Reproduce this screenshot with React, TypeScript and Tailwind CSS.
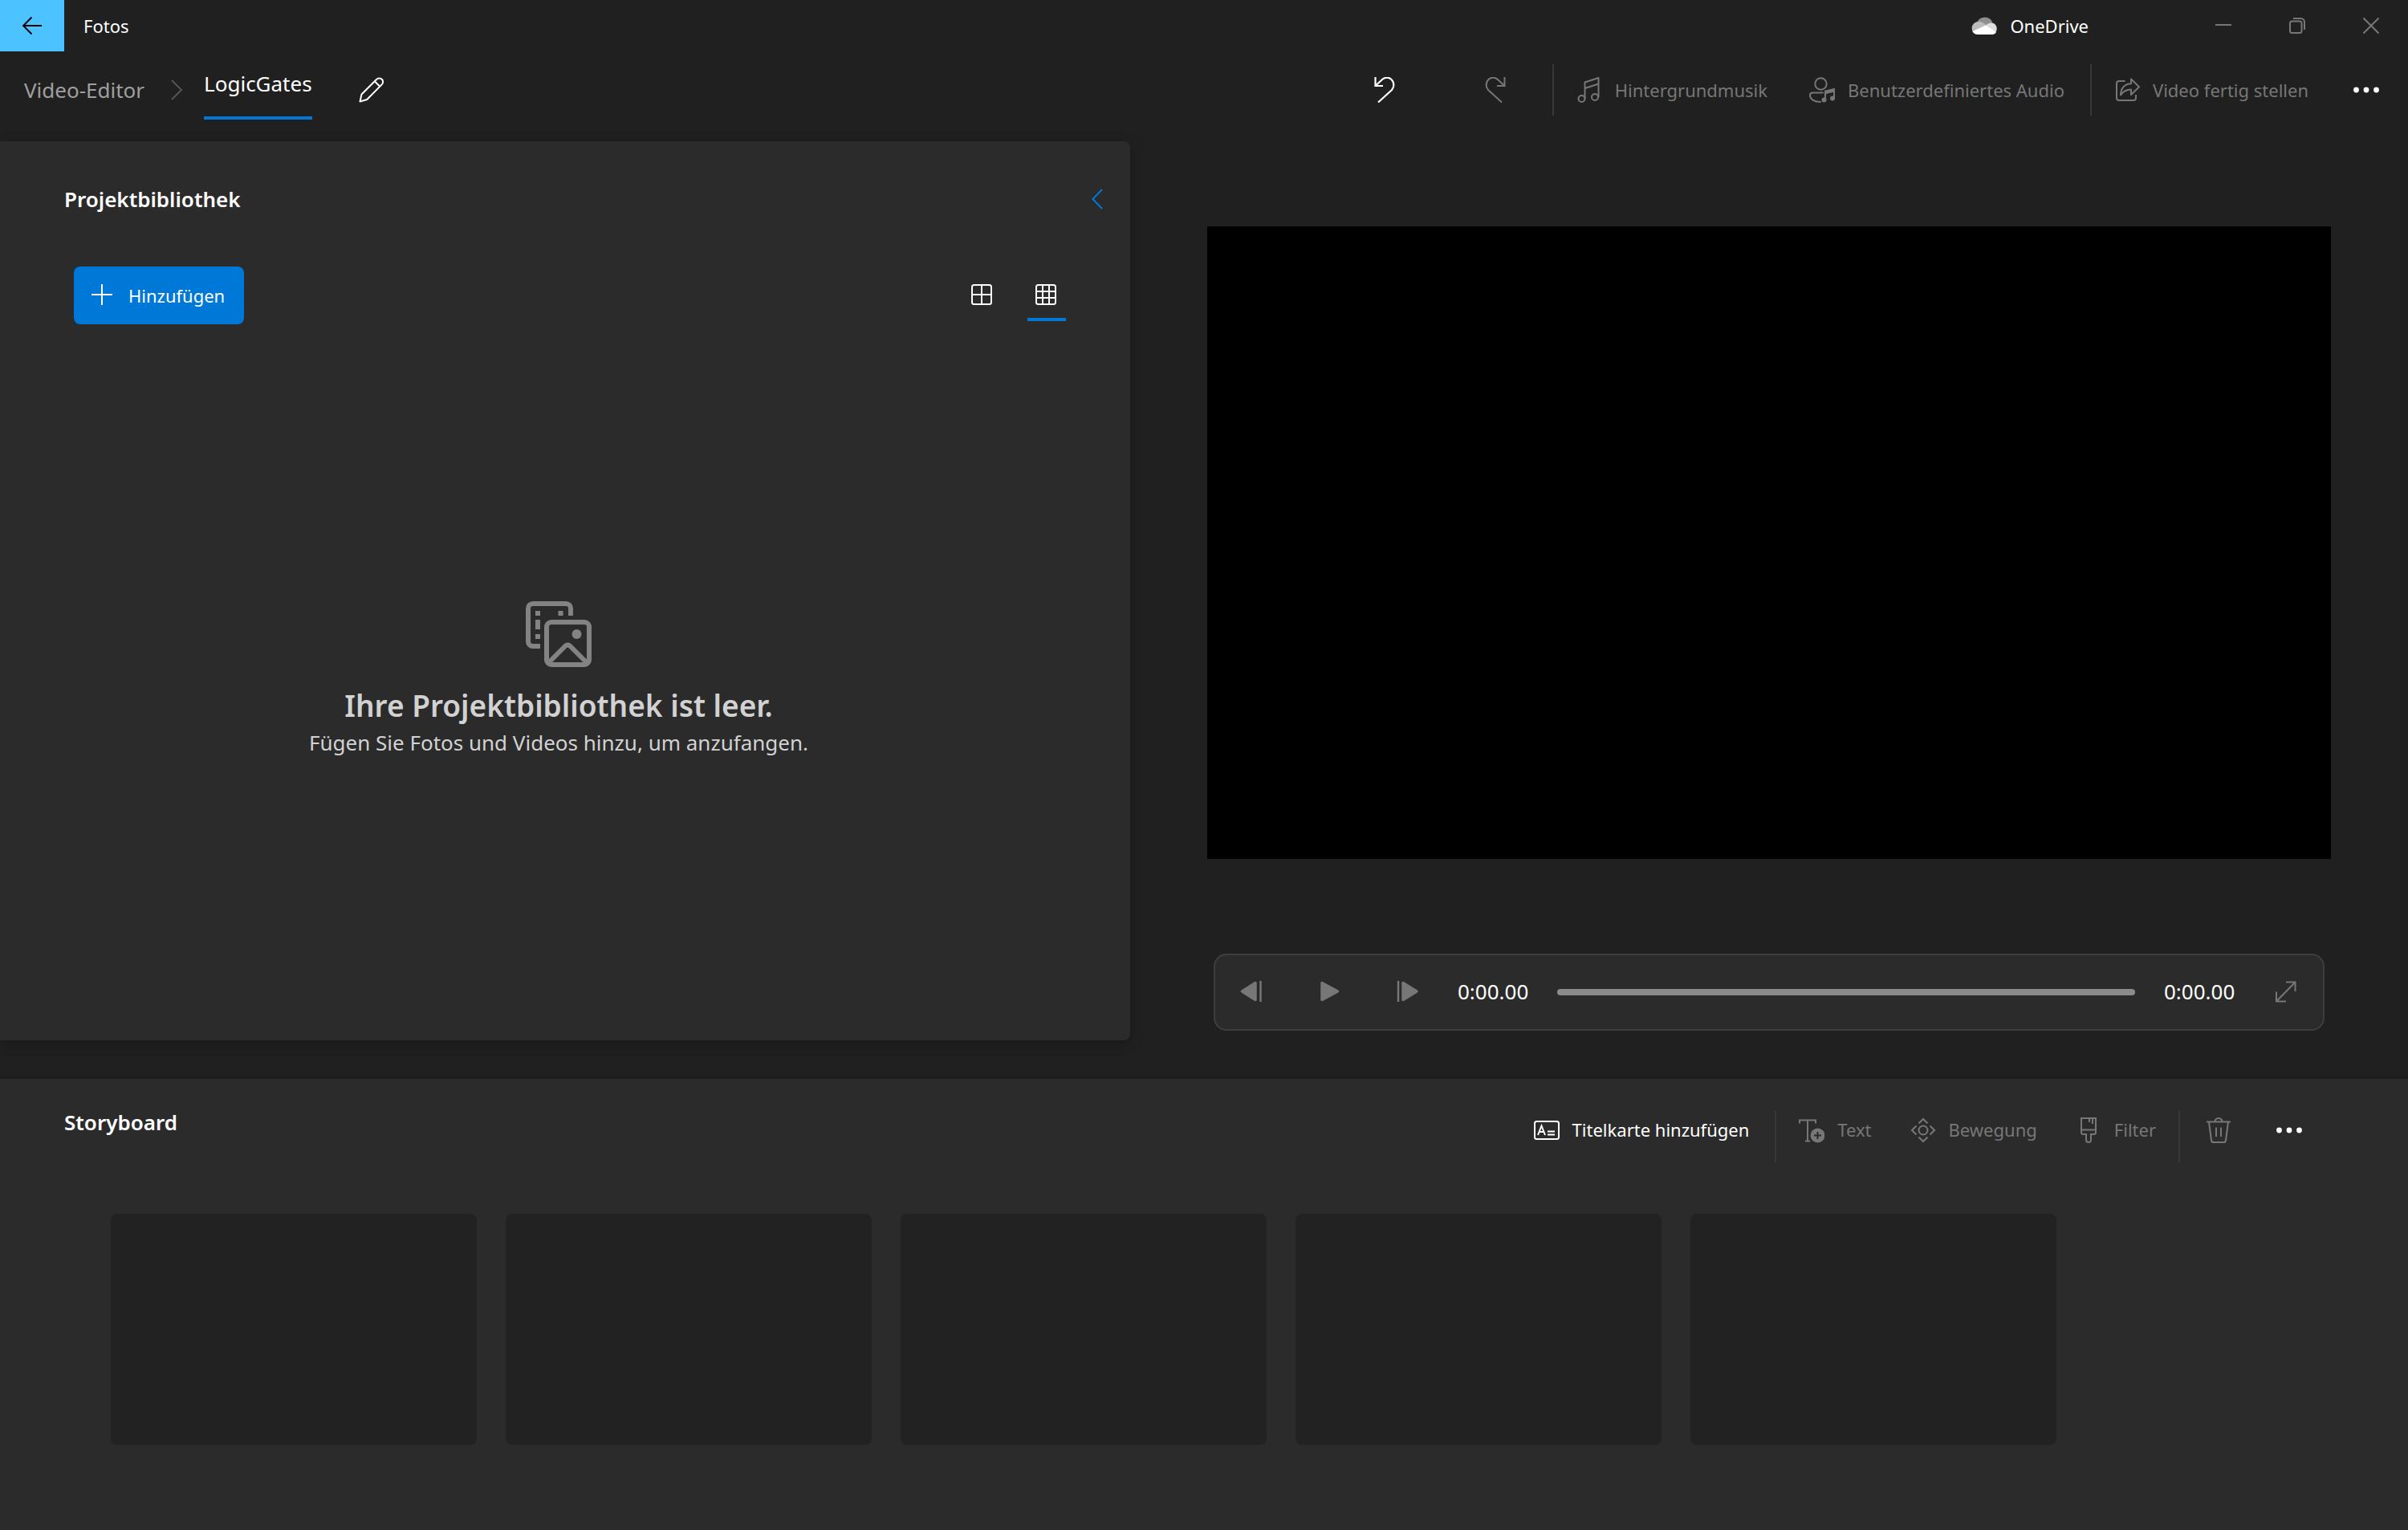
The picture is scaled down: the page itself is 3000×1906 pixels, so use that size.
import type { ReactNode } from "react";

type GlyphProps = { children: ReactNode; className?: string; box?: string };

function Glyph({ children, className = "size-8", box = "0 0 32 32" }: GlyphProps) {
  return (
    <svg viewBox={box} fill="none" stroke="currentColor" strokeWidth={2} className={`shrink-0 ${className}`} aria-hidden="true">
      {children}
    </svg>
  );
}

const BackIcon = () => (
  <Glyph><path d="M28 16H5M15.500 5.500 5 16l10.500 10.500" strokeWidth={1.800} /></Glyph>
);
const ChevronRightIcon = () => (
  <Glyph><path d="m10 4 12 12-12 12" /></Glyph>
);
const ChevronLeftIcon = () => (
  <Glyph><path d="M21 4 9.500 16 21 28" /></Glyph>
);
const PencilIcon = () => (
  <Glyph>
    <path d="M1.500 30.500 3.500 21.500 22 3c2-2 5-2 6.800-.2s1.800 4.600-.2 6.600L10.200 28z M20 5.500l6.500 6.500" strokeLinejoin="round" />
  </Glyph>
);
const UndoIcon = () => (
  <Glyph><path d="M3.500 0v11H13M3.500 11l8-7.500C15 0 20 0 23 2.500c4.500 4 4 10 1 13.500L7 31.500" strokeWidth={2.200} /></Glyph>
);
const RedoIcon = () => (
  <Glyph><path d="M28.500 0v11H19M28.500 11l-8-7.500C17 0 12 0 9 2.500c-4.500 4-4 10-1 13.500l17 15.500" /></Glyph>
);
const MusicIcon = () => (
  <Glyph>
    <circle cx="6.500" cy="27" r="4" />
    <circle cx="23" cy="25" r="4" />
    <path d="M10.500 27V6.500l17-5.500v24M10.500 14l17-5.500" strokeLinejoin="round" />
  </Glyph>
);
const PersonAudioIcon = () => (
  <Glyph>
    <circle cx="14.500" cy="8.500" r="7.200" />
    <path d="M17 19.500H4.500C2.500 19.500 1 20.500 1 22.500 1 28 7 31 14 31" strokeLinecap="round" />
    <path d="M20 28V17.500L31 15v11.500" />
    <path d="M19 17.500 32 14.500v4L21 21v-3z" fill="currentColor" stroke="none" />
    <circle cx="18.500" cy="28.500" r="3" fill="currentColor" stroke="none" />
    <circle cx="29" cy="26.500" r="3" fill="currentColor" stroke="none" />
  </Glyph>
);
const ShareIcon = () => (
  <Glyph>
    <path d="M13.500 5H6C4.300 5 3 6.300 3 8v18c0 1.700 1.300 3 3 3h18c1.700 0 3-1.300 3-3v-4" />
    <path d="M21 2.500v5.800C13 8.300 8 14 8 22.500c3.500-5.500 7.500-7 13-7V22l10-9.800z" strokeLinejoin="round" />
  </Glyph>
);
const MoreIcon = () => (
  <Glyph>
    <g fill="currentColor" stroke="none">
      <circle cx="3.500" cy="16" r="3.400" />
      <circle cx="16" cy="16" r="3.400" />
      <circle cx="28.500" cy="16" r="3.400" />
    </g>
  </Glyph>
);
const CloudIcon = () => (
  <Glyph>
    <g stroke="none">
      <path d="M7 12a10.500 10.500 0 0 1 19.500 0l-9 6z" fill="#8f8f8f" />
      <path d="M2 24C-1 19 1 11.500 9 11c3-.2 5 1 6.500 2l5 3.500L12 21z" fill="#bcbcbc" />
      <path d="M17.500 16.500c2-2.500 4.500-4 7.500-4 5.500 0 8.500 6.500 5.500 11.500z" fill="#dedede" />
      <path d="M1.500 23 18 15.500l13 8.500c-1 2-3 3-5 3H8c-3 0-5.500-1.500-6.500-4z" fill="#fff" />
    </g>
  </Glyph>
);
const MinimizeIcon = () => <Glyph><path d="M6 15h20" /></Glyph>;
const RestoreIcon = () => (
  <Glyph>
    <rect x="7" y="10.500" width="14.500" height="14.500" rx="2.500" />
    <path d="M11 7h9.500c2.500 0 4.500 2 4.500 4.500V21" />
  </Glyph>
);
const CloseIcon = () => <Glyph><path d="m6.500 6.500 19 19m0-19-19 19" /></Glyph>;
const PlusIcon = () => <Glyph><path d="M15 2v26M2 15h26" /></Glyph>;
const LargeGridIcon = () => (
  <Glyph>
    <rect x="3" y="3" width="24" height="24" rx="2.500" />
    <path d="M15 3v24M3 15h24" />
  </Glyph>
);
const SmallGridIcon = () => (
  <Glyph>
    <rect x="3" y="3" width="24" height="24" rx="2.500" />
    <path d="M11 3v24M19 3v24M3 11h24M3 19h24" />
  </Glyph>
);
const LibraryIcon = () => (
  <Glyph box="0 0 82 82" className="size-[82px]">
    <g strokeWidth={6}>
      <path d="M56 18V9c0-3.500-2.500-6-6-6H9C5.500 3 3 5.500 3 9v41c0 3.500 2.500 6 6 6h9" />
      <rect x="26" y="26" width="53" height="53" rx="6" />
      <path d="m28 77 21-21c2-2 4.500-2 6.500 0l21 21" />
      <path d="M15 12v6M15 23v12M15 41v6M43.500 12v6" />
    </g>
    <circle cx="63.500" cy="41" r="6" fill="currentColor" stroke="none" />
  </Glyph>
);
const PreviousFrameIcon = () => (
  <Glyph>
    <path d="M20 4.500v21L3.500 15z" fill="currentColor" strokeLinejoin="round" strokeWidth={3.500} />
    <path d="M26.500 2v26" strokeWidth={2.500} />
  </Glyph>
);
const PlayIcon = () => (
  <Glyph><path d="M7 4.500v21L26.500 15z" fill="currentColor" strokeLinejoin="round" strokeWidth={3.500} /></Glyph>
);
const NextFrameIcon = () => (
  <Glyph>
    <path d="M12 4.500v21L29 15z" fill="currentColor" strokeLinejoin="round" strokeWidth={3.500} />
    <path d="M6 2v26" strokeWidth={2.500} />
  </Glyph>
);
const ExpandIcon = () => (
  <Glyph><path d="M16 3.500h11.500V15M27.500 3.500l-23.500 24M4 15.500V27.500h12" /></Glyph>
);
const TitleCardIcon = () => (
  <Glyph>
    <rect x="1" y="5" width="30" height="22" rx="2.500" />
    <path d="m5 22 4.500-11.500L14 22M6.500 18h6M17 17.500h9M17 21.500h9" />
  </Glyph>
);
const AddTextIcon = () => (
  <Glyph>
    <path d="M1 7.500V3.500h20v4M11 3.500v26M8 29.500h6" />
    <circle cx="23.500" cy="22.500" r="9" fill="currentColor" stroke="none" />
    <path d="M23.500 18v9M19 22.500h9" stroke="#2b2b2b" />
  </Glyph>
);
const MotionIcon = () => (
  <Glyph>
    <circle cx="16" cy="16" r="5.500" />
    <path d="m10.500 7.500 5.500-5.500 5.500 5.500M10.500 24.500 16 30l5.500-5.500M7.500 10.500 2 16l5.500 5.500M24.500 10.500 30 16l-5.500 5.500" />
  </Glyph>
);
const BrushIcon = () => (
  <Glyph>
    <path d="M7 1h18v17.500c0 1.500-1 2.500-2.500 2.500H19v7a3 3 0 0 1-6 0v-7H9.500C8 21 7 20 7 18.500zM7 15.500h18M17 1v5M21 1v7" />
  </Glyph>
);
const TrashIcon = () => (
  <Glyph>
    <path d="M1 5.500h30M11.500 5.500a4.500 4.500 0 0 1 9 0M4 5.500l3 23c.2 1.500 1.200 2.500 2.500 2.500h13c1.300 0 2.300-1 2.500-2.500l3-23M13 12.500V24M19 12.500V24" />
  </Glyph>
);

type ToolProps = { icon: ReactNode; label: string; active?: boolean; className?: string };

function Tool({ icon, label, active = false, className = "px-6" }: ToolProps) {
  return (
    <button
      type="button"
      disabled={!active}
      className={`flex h-12 items-center gap-4 text-white disabled:text-[#777777] ${className}`}
    >
      {icon}
      <span className="whitespace-nowrap">{label}</span>
    </button>
  );
}

type IconToolProps = { icon: ReactNode; label: string; className: string; disabled?: boolean };

function IconTool({ icon, label, className, disabled = false }: IconToolProps) {
  return (
    <button
      type="button"
      aria-label={label}
      disabled={disabled}
      className={`flex items-center justify-center text-white disabled:text-[#777777] ${className}`}
    >
      {icon}
    </button>
  );
}

const Divider = () => <span className="mx-1 h-16 w-[2px] shrink-0 bg-[#383838]" />;

function TitleBar() {
  return (
    <div className="flex h-16 items-center">
      <button type="button" aria-label="Zurück" className="flex h-16 w-20 items-center justify-center bg-[#4cc2ff] text-black">
        <BackIcon />
      </button>
      <span className="ml-6">Fotos</span>
      <div className="ml-auto flex items-center">
        <button type="button" className="mr-[122px] flex h-16 items-center gap-4">
          <CloudIcon />
          OneDrive
        </button>
        <div className="flex text-[#777777]">
          <button type="button" aria-label="Minimieren" className="flex h-16 w-[92px] items-center justify-center"><MinimizeIcon /></button>
          <button type="button" aria-label="Wiederherstellen" className="flex h-16 w-[92px] items-center justify-center"><RestoreIcon /></button>
          <button type="button" aria-label="Schließen" className="flex h-16 w-[92px] items-center justify-center"><CloseIcon /></button>
        </div>
      </div>
    </div>
  );
}

function CommandBar() {
  return (
    <header className="mb-4 flex h-24 items-center justify-between">
      <nav aria-label="Navigationspfad" className="flex h-full items-center pl-[30px] text-[26px]">
        <a href="#video-editor" className="text-[#9f9f9f]">Video-Editor</a>
        <span className="mr-[18px] ml-6 text-[#555555]"><ChevronRightIcon /></span>
        <a href="#logicgates" aria-current="page" className="flex h-[85px] items-center self-start border-b-4 border-[#0078d7]">
          LogicGates
        </a>
        <IconTool icon={<PencilIcon />} label="Umbenennen" className="ml-[50px] h-12 px-2" />
      </nav>
      <div className="flex items-center pr-2">
        <IconTool icon={<UndoIcon />} label="Rückgängig" className="h-12 px-13" />
        <IconTool icon={<RedoIcon />} label="Wiederholen" className="h-12 px-13" disabled />
        <Divider />
        <Tool icon={<MusicIcon />} label="Hintergrundmusik" className="pr-7 pl-6" />
        <Tool icon={<PersonAudioIcon />} label="Benutzerdefiniertes Audio" className="pr-7 pl-6" />
        <Divider />
        <Tool icon={<ShareIcon />} label="Video fertig stellen" className="pr-7 pl-6" />
        <IconTool icon={<MoreIcon />} label="Mehr anzeigen" className="h-12 px-7" />
      </div>
    </header>
  );
}

function Library() {
  return (
    <section className="flex flex-col rounded-r-lg bg-[#2b2b2b] pt-14 shadow-[0_4px_16px_rgba(0,0,0,0.25)]">
      <div className="flex items-center justify-between pl-20">
        <h2 className="text-[26px] leading-8 font-semibold">Projektbibliothek</h2>
        <button type="button" aria-label="Bibliothek einklappen" className="flex w-20 justify-center text-[#0078d7]">
          <ChevronLeftIcon />
        </button>
      </div>
      <div className="mt-[68px] flex items-center justify-between pr-20 pl-[92px]">
        <button type="button" className="flex h-18 items-center gap-4 rounded-lg bg-[#0078d7] pr-6 pl-5">
          <PlusIcon />
          Hinzufügen
        </button>
        <div className="flex gap-8">
          <button type="button" aria-label="Große Kacheln" aria-pressed={false} className="flex h-16 w-12 items-center justify-center">
            <LargeGridIcon />
          </button>
          <button type="button" aria-label="Kleine Kacheln" aria-pressed={true} className="relative flex h-16 w-12 items-center justify-center">
            <SmallGridIcon />
            <span className="absolute inset-x-0 bottom-0 h-1 bg-[#0078d7]" />
          </button>
        </div>
      </div>
      <div className="flex flex-1 flex-col items-center justify-center pr-4 pb-2 text-center text-[#d2d2d2]">
        <span className="text-[#838383]"><LibraryIcon /></span>
        <h3 className="mt-5 text-[37px] leading-14 font-semibold">Ihre Projektbibliothek ist leer.</h3>
        <p className="text-[26px] leading-9">Fügen Sie Fotos und Videos hinzu, um anzufangen.</p>
      </div>
    </section>
  );
}

function Preview() {
  return (
    <section aria-label="Vorschau" className="flex flex-col px-24 pt-[106px] pb-3">
      <div className="aspect-video bg-black" />
      <div className="mx-2 mt-[118px] flex h-24 items-center rounded-2xl bg-[#2b2b2b] inset-ring-2 inset-ring-[#3d3d3d]">
        <IconTool icon={<PreviousFrameIcon />} label="Vorheriges Bild" className="h-24 w-24" disabled />
        <IconTool icon={<PlayIcon />} label="Wiedergeben" className="h-24 w-24" disabled />
        <IconTool icon={<NextFrameIcon />} label="Nächstes Bild" className="h-24 w-24" disabled />
        <span className="w-[140px] pl-4 text-[26px]">0:00.00</span>
        <input
          type="range"
          aria-label="Position"
          min={0}
          max={100}
          defaultValue={0}
          disabled
          className="h-2 min-w-0 flex-1 appearance-none rounded-full bg-[#8b8b8b] [&::-webkit-slider-thumb]:size-0 [&::-webkit-slider-thumb]:appearance-none"
        />
        <span className="w-[140px] pl-9 text-[26px]">0:00.00</span>
        <IconTool icon={<ExpandIcon />} label="Vollbild" className="h-24 w-24" disabled />
      </div>
    </section>
  );
}

function Storyboard() {
  return (
    <section className="flex-1 bg-[#2b2b2b] pt-10 pb-[104px] shadow-[0_0_8px_rgba(0,0,0,0.2)]">
      <div className="flex items-start justify-between pr-[104px] pl-20">
        <h2 className="text-[26px] leading-7 font-semibold">Storyboard</h2>
        <div className="flex items-start">
          <Tool icon={<TitleCardIcon />} label="Titelkarte hinzufügen" className="pr-7 pl-6" active />
          <Divider />
          <Tool icon={<AddTextIcon />} label="Text" />
          <Tool icon={<MotionIcon />} label="Bewegung" />
          <Tool icon={<BrushIcon />} label="Filter" />
          <Divider />
          <IconTool icon={<TrashIcon />} label="Löschen" className="h-12 px-7" disabled />
          <IconTool icon={<MoreIcon />} label="Mehr anzeigen" className="h-12 px-7" />
        </div>
      </div>
      <ul className="mt-16 mr-[438px] ml-[138px] grid grid-cols-5 gap-9">
        {[1, 2, 3, 4, 5].map((slot) => (
          <li key={slot} className="h-72 rounded-lg bg-[#222222]" />
        ))}
      </ul>
    </section>
  );
}

export default function App() {
  return (
    <div className="flex min-h-screen flex-col bg-[#202020] font-['Noto_Sans',sans-serif] text-[22px] text-white">
      <TitleBar />
      <CommandBar />
      <main className="mb-12 grid grid-cols-[176fr_199fr]">
        <Library />
        <Preview />
      </main>
      <Storyboard />
    </div>
  );
}
